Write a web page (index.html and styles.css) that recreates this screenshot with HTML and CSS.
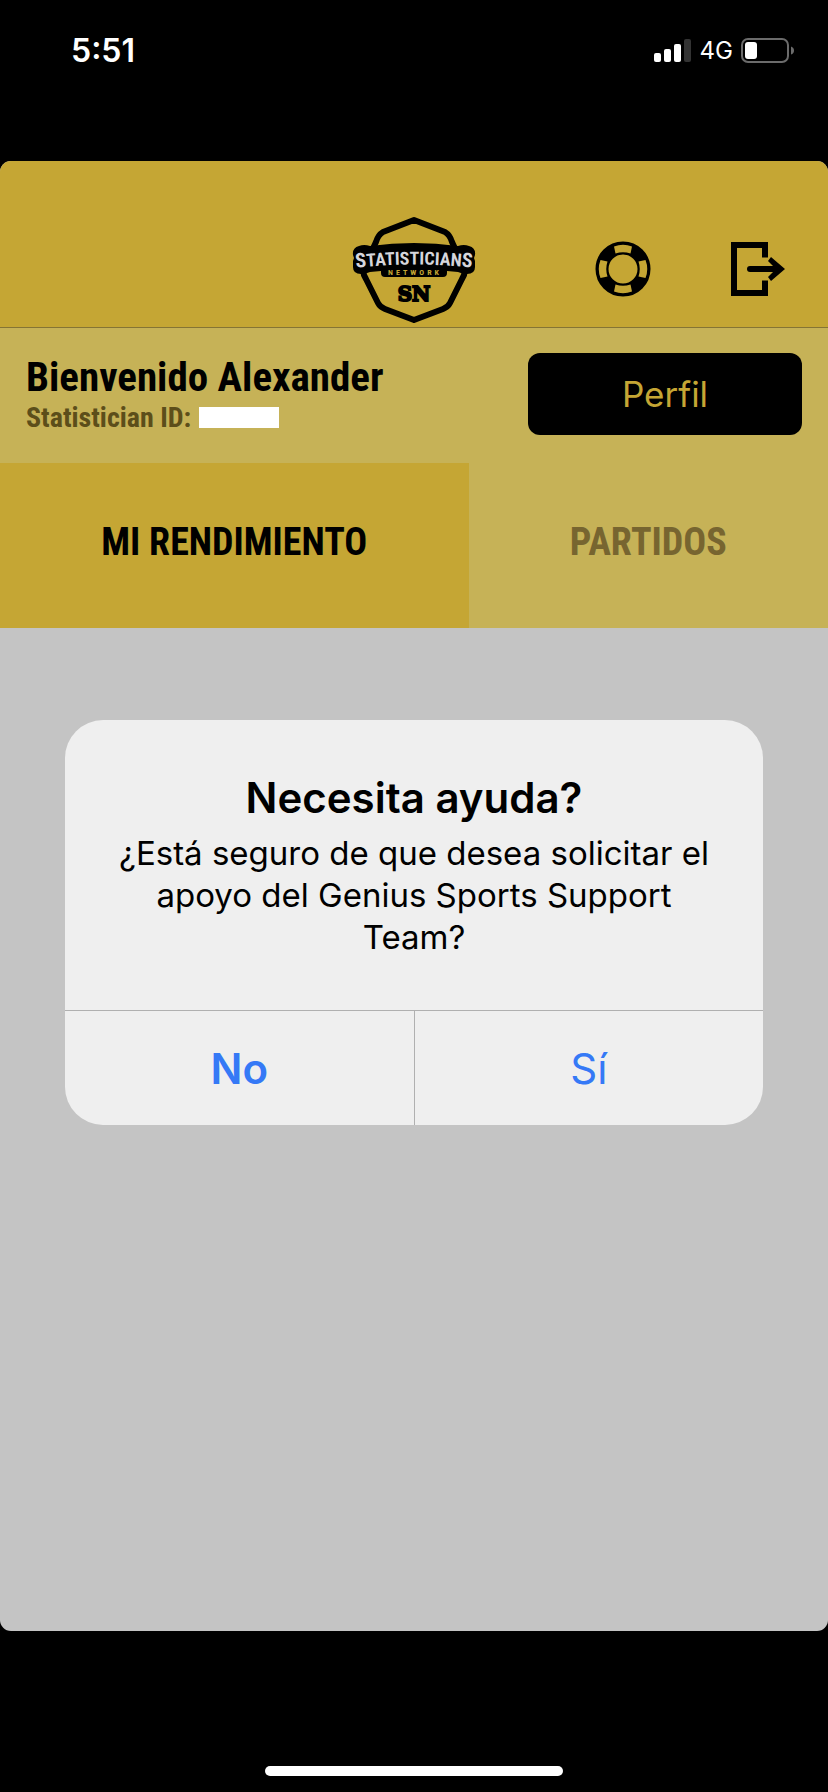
FILE: index.html
```html
<!DOCTYPE html>
<html lang="es">
<head>
    <meta charset="UTF-8">
    <meta name="viewport" content="width=device-width, initial-scale=1.0">
    <title>Statisticians Network</title>
    <link rel="stylesheet" href="styles.css">
</head>
<body>
    <div class="status-bar">
        <span class="time">5:51</span>
        <div class="status-icons">
            <svg width="38" height="24" viewBox="0 0 38 24">
                <rect x="0" y="14" width="7" height="9" rx="2" fill="#fff"/>
                <rect x="10" y="10" width="7" height="13" rx="2" fill="#fff"/>
                <rect x="20" y="5" width="7" height="18" rx="2" fill="#fff"/>
                <rect x="30" y="0" width="7" height="23" rx="2" fill="#333"/>
            </svg>
            <span class="network">4G</span>
            <svg width="54" height="26" viewBox="0 0 54 26">
                <rect x="1" y="1" width="46" height="23" rx="6" fill="none" stroke="#6b6b6b" stroke-width="2"/>
                <rect x="4" y="4" width="12" height="17" rx="3" fill="#fff"/>
                <path d="M50 8.500q3 1 3 4t-3 4z" fill="#6b6b6b"/>
            </svg>
        </div>
    </div>

    <div class="app">
        <header class="header">
            <svg class="logo" viewBox="0 0 124 108" role="img" aria-label="Statisticians Network">
                <path d="M62 5L93 17Q98 20 100 27L112 53Q114 58 110 64L98 88Q96 92 91 94L62 105L33 94Q28 92 26 88L14 64Q10 58 12 53L24 27Q26 20 31 17Z" fill="none" stroke="#000" stroke-width="6" stroke-linejoin="round"/>
                <path d="M7 31Q12 29 18 31Q62 25 106 31Q112 29 117 31Q124 33 123 40L122 43L123 46V52Q123 59 115 59Q110 59 106 57L95 56V58Q95 62 91 62H33Q29 62 29 58V56L18 57Q14 59 9 59Q1 59 1 52V46L2 43L1 40Q0 33 7 31Z"/>
                <path id="arch" d="M2 53Q62 46 122 53" fill="none"/>
                <text class="logo-name" text-anchor="middle"><textPath href="#arch" startOffset="50%"><tspan class="logo-cap">S</tspan>TATISTICIAN<tspan class="logo-cap">S</tspan></textPath></text>
                <text class="logo-network" x="63" y="60" text-anchor="middle">NETWORK</text>
                <text class="logo-sn" x="62" y="86" text-anchor="middle">SN</text>
            </svg>
            <nav class="actions">
                <button class="icon-button" aria-label="Ayuda">
                    <svg width="56" height="56" viewBox="0 0 56 56">
                        <circle cx="28" cy="28" r="21" fill="none" stroke="#000" stroke-width="13"/>
                        <path d="M19 5.500Q28 2 37 5.500L35.500 12.500Q28 10 20.500 12.500ZM19 50.500Q28 54 37 50.500L35.500 43.500Q28 46 20.500 43.500ZM5.500 19Q2 28 5.500 37L12.500 35.500Q10 28 12.500 20.500ZM50.500 19Q54 28 50.500 37L43.500 35.500Q46 28 43.500 20.500Z" fill="#c5a634"/>
                    </svg>
                </button>
                <button class="icon-button" aria-label="Salir">
                    <svg width="56" height="56" viewBox="0 0 56 56">
                        <path d="M35 16.500V4H4V52H35V39.500" fill="none" stroke="#000" stroke-width="6"/>
                        <path d="M20 28H48" stroke="#000" stroke-width="6" stroke-linecap="round"/>
                        <path d="M41 16L55 28L41 40L38 36L46 28L38 20Z"/>
                    </svg>
                </button>
            </nav>
        </header>

        <section class="welcome">
            <div>
                <h1>Bienvenido Alexander</h1>
                <p class="stat-id">Statistician ID: <span class="redacted"></span></p>
            </div>
            <button class="profile-button">Perfil</button>
        </section>

        <nav class="tabs">
            <button class="tab active">MI RENDIMIENTO</button>
            <button class="tab">PARTIDOS</button>
        </nav>

        <main class="content">
            <div class="dialog" role="alertdialog" aria-labelledby="dialogTitle" aria-describedby="dialogText">
                <div class="dialog-body">
                    <h2 id="dialogTitle">Necesita ayuda?</h2>
                    <p id="dialogText">¿Está seguro de que desea solicitar el apoyo del Genius Sports Support Team?</p>
                </div>
                <div class="dialog-buttons">
                    <button class="cancel">No</button>
                    <button>Sí</button>
                </div>
            </div>
        </main>
    </div>

    <div class="bottom-bar">
        <div class="home-indicator"></div>
    </div>
</body>
</html>
```

FILE: styles.css
```css
* {
    margin: 0;
    padding: 0;
    box-sizing: border-box;
}

body {
    display: flex;
    flex-direction: column;
    min-height: 100vh;
    background-color: #000;
    font-family: Inter, "Liberation Sans", sans-serif;
}

button {
    border: none;
    background: none;
    font-family: inherit;
    cursor: pointer;
}

svg {
    display: block;
}

.status-bar {
    display: flex;
    justify-content: space-between;
    align-items: flex-start;
    height: 161px;
    padding: 31px 33px 0 71px;
    color: #fff;
}

.time {
    font-size: 32px;
    font-weight: 600;
    line-height: 40px;
}

.status-icons {
    display: flex;
    align-items: center;
    gap: 8px;
    height: 40px;
}

.network {
    font-size: 24px;
    line-height: 40px;
}

.app {
    flex: 1;
    display: flex;
    flex-direction: column;
    border-radius: 11px;
    overflow: hidden;
    background-color: #c4c4c4;
}

.header {
    display: grid;
    grid-template-columns: 1fr auto 1fr;
    align-items: center;
    height: 167px;
    padding: 50px 42px 0;
    background-color: #c5a634;
    border-bottom: 1px solid #857434;
}

.logo {
    grid-column: 2;
    width: 124px;
    height: 108px;
    font-family: "Roboto Condensed", Roboto, sans-serif;
    font-weight: bold;
}

.logo-name {
    font-size: 18px;
    fill: #d6d6dc;
}

.logo-cap {
    font-size: 20px;
}

.logo-network {
    font-size: 8px;
    letter-spacing: 3px;
    fill: #c5a634;
}

.logo-sn {
    font-family: "DejaVu Serif", serif;
    font-size: 20px;
    stroke: #000;
    stroke-width: 2px;
}

.actions {
    grid-column: 3;
    display: flex;
    justify-content: flex-end;
    gap: 79px;
}

.welcome {
    display: flex;
    justify-content: space-between;
    align-items: center;
    height: 135px;
    padding: 0 26px 4px;
    background-color: #c6b257;
    font-family: "Roboto Condensed", Roboto, sans-serif;
}

.welcome h1 {
    font-size: 41px;
    line-height: 48px;
}

.stat-id {
    display: flex;
    align-items: center;
    gap: 8px;
    font-size: 28px;
    font-weight: bold;
    line-height: 34px;
    color: #5c4e1a;
}

.redacted {
    width: 80px;
    height: 21px;
    background-color: #fff;
}

.profile-button {
    width: 274px;
    height: 82px;
    border-radius: 12px;
    background-color: #000;
    color: #c5a634;
    font-family: Inter, "Liberation Sans", sans-serif;
    font-size: 35px;
}

.tabs {
    display: flex;
    height: 165px;
    background-color: #c6b257;
}

.tab {
    flex: 1 1 auto;
    padding: 0 16px 8px;
    color: #776530;
    font-family: "Roboto Condensed", Roboto, sans-serif;
    font-size: 38px;
    font-weight: bold;
    white-space: nowrap;
}

.tab.active {
    background-color: #c5a634;
    color: #000;
}

.content {
    flex: 1;
    padding: 92px 65px;
}

.dialog {
    border-radius: 38px;
    overflow: hidden;
    background-color: #efefef;
    color: #000;
}

.dialog-body {
    padding: 50px 48px 52px;
    text-align: center;
}

.dialog h2 {
    font-size: 42px;
    font-weight: 600;
    line-height: 56px;
    margin-bottom: 6px;
}

.dialog p {
    font-size: 33px;
    line-height: 42px;
}

.dialog-buttons {
    display: flex;
    border-top: 1px solid #b0b0b0;
}

.dialog-buttons button {
    flex: 1;
    height: 114px;
    color: #3579f6;
    font-size: 42px;
}

.dialog-buttons .cancel {
    border-right: 1px solid #b0b0b0;
    font-weight: 600;
}

.bottom-bar {
    display: flex;
    justify-content: center;
    align-items: flex-end;
    height: 161px;
    padding-bottom: 16px;
}

.home-indicator {
    width: 36%;
    height: 10px;
    border-radius: 5px;
    background-color: #fff;
}
```
